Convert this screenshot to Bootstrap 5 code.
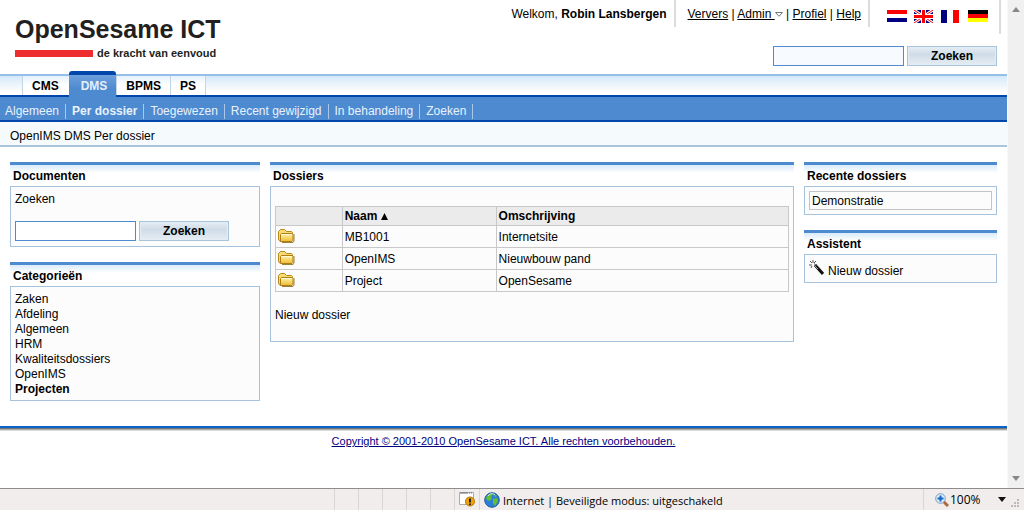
<!DOCTYPE html>
<html lang="nl">
<head>
<meta charset="utf-8">
<meta name="viewport" content="width=device-width, initial-scale=1">
<title>OpenIMS DMS Per dossier</title>
<link href="https://cdn.jsdelivr.net/npm/bootstrap@5.3.0/dist/css/bootstrap.min.css" rel="stylesheet">
<style>
:root { --dark:#0046ab; --blue:#4e8ad0; --line:#a5c3dd; }
body { font: 12px/15px "Liberation Sans", Arial, sans-serif; color:#000; background:#fff; padding-bottom:3px; }
a { color:inherit; text-decoration:none; }
.logo-name { font:bold 25px/32px "Liberation Sans", Arial, sans-serif; color:#231f20; }
.logo-sub { font:bold 11px/16px "Liberation Sans", Arial, sans-serif; color:#231f20; }
.logo-bar { width:78px; height:7px; background:#ee2e2e; }
.brand { padding:13px 0 0 15px; }
.site-head { height:74px; }
.top-row { padding-right:6px; }
.top-cell { height:27px; padding:7px 7px 0 12px; border-right:2px solid #dcdcdc; }
.top-cell.flags { height:34px; padding:10px 11px 0 17px; gap:7px; }
.top-cell a { text-decoration:underline; }
.flag { width:20px; height:13px; display:block; }
.head-search { padding:12px 10px 0 0; }
.search-line { gap:3px; }
.field { height:20px; border:1px solid var(--blue); background:#fff; padding:0 4px; min-width:0; border-radius:0; }
.field-top { width:131px; background:#f7fbff; }
.field-side { width:121px; }
.go { width:90px; height:20px; padding:0; font-weight:bold; line-height:16px; border:1px solid #a8c4da; background:linear-gradient(#e7eef4,#cfdce8 40%,#e6ecf2); box-shadow:inset 0 0 0 1px #e5edf4; color:#000; }
.tabs { height:21px; border-top:2px solid #93bfe8; background:linear-gradient(#d5e8f8,#fff 85%); padding-left:22px; }
.tabs a { font-weight:bold; line-height:20px; background:linear-gradient(#e6f2fc,#fff 50%); border-left:1px solid #c3d5e5; padding:0 9px; }
.tabs a:first-child { padding-right:10px; }
.tabs a:last-child { border-right:1px solid #c3d5e5; }
.tabs a.on { background:linear-gradient(#6d9fdb,var(--blue) 60%); color:#e4effa; border:0; border-top:4px solid var(--dark); border-radius:3px 3px 0 0; margin-top:-5px; padding:0 9px 0 12px; position:relative; height:27px; line-height:22px; }
.subnav { height:27px; background:var(--blue); border-top:2px solid var(--dark); border-bottom:2px solid var(--dark); padding-top:7px; }
.subnav a { color:#e8f2fc; border-right:1px solid #a9c8ea; padding:0 6px; height:15px; }
.subnav a:first-child { padding-left:5px; }
.crumbs { height:25px; background:#f5fafd; border-bottom:2px solid #a9c4dc; padding:7px 10px 0; }
.cols { display:grid; grid-template-columns:250fr 524fr 193fr; gap:10px; padding:15px 10px 25px; }
.side { gap:15px; }
.pane-title { height:24px; margin:0; border-top:3px solid var(--blue); background:linear-gradient(#d9ebfa,#fff 8px); font-size:12px; line-height:15px; font-weight:bold; padding:4px 3px 0; }
.pane-box { border:1px solid var(--line); background:#fcfcfc; padding:5px 4px 3px; }
.pane-box.main-box { min-height:156px; padding-top:19px; }
.pane-box.find-box { padding-bottom:5px; }
.find-box label { margin-bottom:14px; }
.files { width:100%; border-collapse:collapse; }
.files th, .files td { border:1px solid #c8c8c8; padding:1px 2px 0; height:22px; }
.files thead th { background:#ebebeb; height:19px; }
.files tbody td:first-child { padding:0 2px 2px; }
.files svg { display:block; }
.recent { border:1px solid #c4c4c4; padding:2px 2px 0; height:19px; margin:-1px 0 1px; }
.wizard { gap:4px; align-items:flex-end; }
.foot { border-top:2px solid #0a62cb; box-shadow:inset 0 1px #777, inset 0 2px #aaa, inset 0 3px #ddd; text-align:center; padding-top:6px; font-size:11px; color:#000080; }
.foot a { text-decoration:underline; }
.scroller { width:17px; background:#f0f0f0; padding:7px 4px; border-left:1px solid #f8f8f8; }
.status { height:22px; border-top:1px solid #8d8d8d; background:#f0edec; font:11px/23px "Open Sans","Noto Sans",sans-serif; white-space:nowrap; }
.slot { flex:0 0 24px; border-left:1px solid #d9d6d5; }
.slot svg { display:block; }
.zone { flex-basis:444px; padding-left:4px; gap:3px; }
.zoomer { flex-basis:101px; padding-left:11px; gap:1px; font-size:12px; }
</style>
</head>
<body class="d-flex flex-column min-vh-100">
<svg width="0" height="0" class="position-absolute" aria-hidden="true">
 <defs>
  <linearGradient id="gold" x2="0" y2="1"><stop stop-color="#fff4a8"/><stop offset="1" stop-color="#edbb35"/></linearGradient>
  <symbol id="folder" viewBox="0 0 17 14">
   <path d="M1.500 12 .5 10V2.500L2.500.5h4l2 2h5l1 1V10z" fill="#f6dc70" stroke="#b98618"/>
   <path d="M2.500 12.500V5.500l1-1h11l.5 1v6l-1 1z" fill="url(#gold)" stroke="#b07c16"/>
   <path d="M3.500 5.500h10" stroke="#fffbdc"/><path d="M4 13.500h11l1-1.500V5" fill="none" stroke="#9a813c"/>
  </symbol>
 </defs>
</svg>
<div class="d-flex flex-grow-1">
 <div class="flex-grow-1">
  <header class="site-head d-flex justify-content-between">
   <div class="brand">
    <div class="logo-name">OpenSesame ICT</div>
    <div class="d-flex align-items-center gap-1"><div class="logo-bar"></div><div class="logo-sub">de kracht van eenvoud</div></div>
   </div>
   <div>
    <div class="top-row d-flex justify-content-end">
     <div class="top-cell">Welkom, <b>Robin Lansbergen</b></div>
     <nav class="top-cell"><a href="#">Ververs</a> | <a href="#">Admin <svg width="8" height="5" viewBox="0 0 8 5"><path d="M.5.5h7L4 4.300z" fill="#fff" stroke="#777"/></svg></a> | <a href="#">Profiel</a> | <a href="#">Help</a></nav>
     <div class="top-cell flags d-flex">
      <a href="#" aria-label="Nederlands"><svg class="flag" viewBox="0 0 20 13"><path fill="#fff" d="M0 0h20v13H0z"/><path fill="#f00" d="M0 0h20v4H0z"/><path fill="#000080" d="M0 8h20v4H0z"/></svg></a>
      <a href="#" aria-label="English"><svg class="flag" viewBox="0 0 20 13"><path fill="#000080" d="M0 0h19v13H0z"/><path d="m0 0 19 13M19 0 0 13" stroke="#fff" stroke-width="3"/><path d="m0 0 19 13M19 0 0 13" stroke="#f00"/><path d="M9.500 0v13M0 6.500h19" stroke="#fff" stroke-width="5"/><path d="M9.500 0v13M0 6.500h19" stroke="#f00" stroke-width="3"/></svg></a>
      <a href="#" aria-label="Français"><svg class="flag" viewBox="0 0 20 13"><path fill="#fff" d="M0 0h20v13H0z"/><path fill="#000080" d="M0 0h6v13H0z"/><path fill="#f00" d="M12 0h6v13h-6z"/></svg></a>
      <a href="#" aria-label="Deutsch"><svg class="flag" viewBox="0 0 20 13"><path d="M0 0h20v4H0z"/><path fill="#f00" d="M0 4h20v4H0z"/><path fill="#ff0" d="M0 8h20v4H0z"/></svg></a>
     </div>
    </div>
    <form class="head-search search-line d-flex justify-content-end">
     <input class="field field-top" type="text" aria-label="Zoekterm"><button class="go" type="button">Zoeken</button>
    </form>
   </div>
  </header>
  <nav class="tabs d-flex"><a href="#">CMS</a><a class="on" href="#">DMS</a><a href="#">BPMS</a><a href="#">PS</a></nav>
  <nav class="subnav d-flex"><a href="#">Algemeen</a><a href="#"><b>Per dossier</b></a><a href="#">Toegewezen</a><a href="#">Recent gewijzigd</a><a href="#">In behandeling</a><a href="#">Zoeken</a></nav>
  <div class="crumbs">OpenIMS DMS Per dossier</div>
  <main class="cols">
   <div class="side d-flex flex-column">
    <section><h2 class="pane-title">Documenten</h2>
     <form class="pane-box find-box"><label for="q" class="d-block">Zoeken</label>
      <div class="search-line d-flex"><input id="q" class="field field-side" type="text"><button class="go" type="button">Zoeken</button></div></form></section>
    <section><h2 class="pane-title">Categorieën</h2>
     <div class="pane-box d-flex flex-column"><a href="#">Zaken</a><a href="#">Afdeling</a><a href="#">Algemeen</a><a href="#">HRM</a><a href="#">Kwaliteitsdossiers</a><a href="#">OpenIMS</a><a href="#"><b>Projecten</b></a></div></section>
   </div>
   <section><h2 class="pane-title">Dossiers</h2>
    <div class="pane-box main-box">
     <table class="files">
      <colgroup><col style="width:13%"><col style="width:30%"><col></colgroup>
      <thead><tr><th></th><th>Naam <svg class="d-inline" width="7" height="7" viewBox="0 0 8 8"><path d="M4 0 8 8H0z"/></svg></th><th>Omschrijving</th></tr></thead>
      <tbody>
       <tr><td><svg width="17" height="14"><use href="#folder"/></svg></td><td>MB1001</td><td>Internetsite</td></tr>
       <tr><td><svg width="17" height="14"><use href="#folder"/></svg></td><td>OpenIMS</td><td>Nieuwbouw pand</td></tr>
       <tr><td><svg width="17" height="14"><use href="#folder"/></svg></td><td>Project</td><td>OpenSesame</td></tr>
      </tbody>
     </table>
     <a href="#" class="d-block mt-3">Nieuw dossier</a>
    </div></section>
   <div class="side d-flex flex-column">
    <section><h2 class="pane-title">Recente dossiers</h2><div class="pane-box"><a href="#" class="recent d-block">Demonstratie</a></div></section>
    <section><h2 class="pane-title">Assistent</h2><div class="pane-box"><a href="#" class="d-flex wizard"><svg width="15" height="19" viewBox="0 0 15 19"><path d="m6 5 8 9" stroke="#111" stroke-width="3"/><path d="m6 6 3 3" stroke="#999"/><path d="M4 0v3M1 1l2 2M0 5h3M7 1 5 3M2 8l1-2M6 5h2M5 4h1" stroke="#555"/></svg>Nieuw dossier</a></div></section>
   </div>
  </main>
  <footer class="foot"><a href="#">Copyright © 2001-2010 OpenSesame ICT. Alle rechten voorbehouden.</a></footer>
 </div>
 <div class="scroller d-flex flex-column justify-content-between flex-shrink-0"><svg width="8" height="5"><path d="m4 0 4 5H0z" fill="#888"/></svg><svg width="8" height="5"><path d="M0 0h8L4 5z" fill="#888"/></svg></div>
</div>
<footer class="status d-flex justify-content-end">
 <span class="slot"></span><span class="slot"></span><span class="slot"></span><span class="slot"></span><span class="slot"></span>
 <span class="slot px-1"><svg width="16" height="20" viewBox="0 -2 16 20"><path d="M.5 1.500h14v12H.5z" fill="#fff" stroke="#aaa"/><path d="M1 2h13" stroke="#667" stroke-dasharray="8 1 1 1 1 1"/><circle cx="11" cy="10.500" r="4.500" fill="#f0a30d" stroke="#b87502"/><path d="M11 7.500v4m0 1V14" stroke="#222" stroke-width="2"/></svg></span>
 <span class="slot zone d-flex"><svg width="16" height="22" viewBox="0 0 16 22"><circle cx="8" cy="11" r="7.300" fill="#2b7fd8" stroke="#245a9c"/><path d="M2 9c1-4 5-5 7-4l-2 3 1 2-3 2-2-1zM9 10l4-1 1 3-3 5-2-3zM10 5l3 2-2 1z" fill="#63bd35"/><path d="M4 7c2-3 5-3 7-1" stroke="#d3efff" fill="none"/></svg>Internet | Beveiligde modus: uitgeschakeld</span>
 <span class="slot zoomer d-flex align-items-center"><svg width="14" height="14" viewBox="0 0 14 14"><path d="m8 8 5 5" stroke="#b06a39" stroke-width="3"/><circle cx="5.500" cy="5.500" r="4.800" fill="#dcefff" stroke="#7d99b8"/><path d="M5.500 2.500v6M2.500 5.500h6" stroke="#1765c0" stroke-width="2"/></svg>100%<svg class="ms-3" width="8" height="5"><path d="M0 0h8L4 5z" fill="#111"/></svg><svg class="ms-auto mt-2 me-1" width="9" height="9" fill="#bbb"><path d="M6 0h2v2H6zM3 3h2v2H3zM6 3h2v2H6zM0 6h2v2H0zM3 6h2v2H3zM6 6h2v2H6z"/></svg></span>
</footer>
<script src="https://cdn.jsdelivr.net/npm/bootstrap@5.3.0/dist/js/bootstrap.bundle.min.js"></script>
</body>
</html>
